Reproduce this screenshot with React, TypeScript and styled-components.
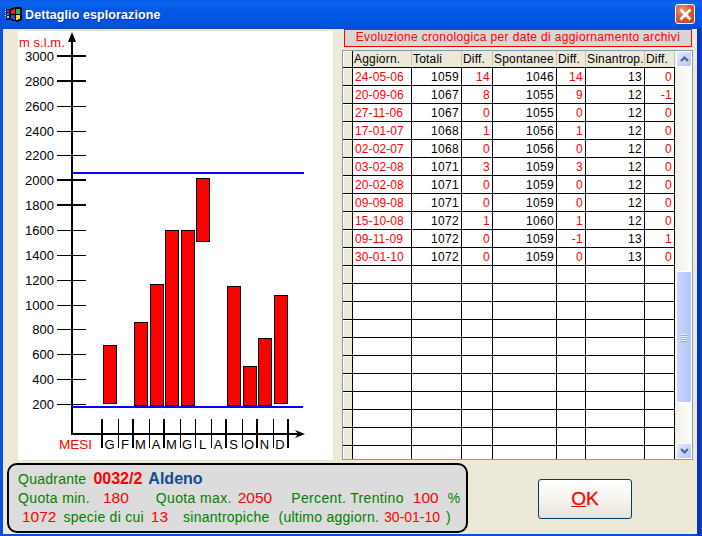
import React from "react";
import styled, { createGlobalStyle } from "styled-components";

const Global = createGlobalStyle`
  html, body { margin: 0; padding: 0; background: #0054e3; }
  * { box-sizing: border-box; }
`;

const Window = styled.div`
  width: 702px; height: 536px; overflow: hidden;
  display: flex; flex-direction: column;
  background: linear-gradient(90deg, #0a50dc 0, #0a50dc 694px, #0331b8 698px, #0a3fc4 702px);
  font-family: "Liberation Sans", Arial, sans-serif;
`;
const TitleBar = styled.div`
  height: 29px; flex: none; display: flex; align-items: center;
  padding: 0 6px 0 5px; gap: 3px;
  background: linear-gradient(180deg, #0a5ae6 0, #0a66f0 3px, #0458e4 9px, #0357e6 18px, #0450dd 25px, #0a49c8 29px);
`;
const TitleText = styled.div`
  flex: 1; color: #fff; font-size: 12.5px; font-weight: bold; letter-spacing: 0.1px;
  text-shadow: 1px 1px 0 #0a2f9c; padding-top: 1px;
`;
const CloseButton = styled.div`
  width: 20px; height: 20px; border-radius: 3px; border: 1px solid #fff;
  background: radial-gradient(circle at 35% 30%, #ee9c7d 0, #dd5a32 45%, #c23a1a 100%);
  display: flex; align-items: center; justify-content: center; margin-top: -1px; margin-right: 1px;
`;
const Frame = styled.div`
  flex: 1; margin: 0 5px 2px 3px; background: #ece9d8; display: flex; flex-direction: column;
`;
const Top = styled.div`
  display: flex; height: 431px; padding-left: 15px;
`;
const ChartPanel = styled.div`
  width: 315px; height: 429px; margin-top: 2px; background: #fff; flex: none;
`;
const RightColumn = styled.div`
  width: 351px; margin-left: 9px; flex: none; display: flex; flex-direction: column;
`;
const Caption = styled.div`
  height: 18px; margin: 0 0 3px 2px; width: 348px;
  border: 1px solid #f00; background: #d6d6d6; color: #f00;
  font-size: 12px; letter-spacing: 0.35px; text-align: center; line-height: 15px; white-space: nowrap;
`;
const GridFrame = styled.div`
  height: 410px; border: 1px solid #7f9db9; display: flex; background: #fff; overflow: hidden;
`;
const GridViewport = styled.div`
  width: 332px; height: 408px; overflow: hidden; flex: none;
`;
const Table = styled.table`
  width: 332px; table-layout: fixed; border-collapse: separate; border-spacing: 0;
`;
const HeadCell = styled.th<{ $w: number }>`
  width: ${(p) => p.$w}px; height: 17px; padding: 0 0 0 1px; background: #ece9d8;
  border-bottom: 1px solid #000;
  box-shadow: inset -1px 0 0 #c7c5b2;
  font-size: 12px; font-weight: normal; letter-spacing: 0.2px; color: #000; text-align: left; white-space: nowrap; overflow: hidden;
  line-height: 16px;
`;
const SelectorHead = styled.th`
  width: 10px; height: 17px; padding: 0; background: #ece9d8;
  border-right: 1px solid #000; border-bottom: 1px solid #000;
  box-shadow: inset 1px 1px 0 #fff;
`;
const SelectorCell = styled.td`
  padding: 0; height: 18px; background: #ece9d8;
  border-right: 1px solid #000; border-bottom: 1px solid #000;
  box-shadow: inset 1px 1px 0 #fff;
`;
const Cell = styled.td<{ $red?: boolean; $date?: boolean }>`
  height: 18px; padding: ${(p) => (p.$date ? "0 0 0 2px" : "0 2px 0 0")};
  border-right: 1px solid #000; border-bottom: 1px solid #000;
  font-size: 12px; line-height: 16px; white-space: nowrap; overflow: hidden;
  text-align: ${(p) => (p.$date ? "left" : "right")};
  color: ${(p) => (p.$red ? "#f00" : "#000")};
  letter-spacing: ${(p) => (p.$date ? "0.1px" : "0.3px")};
`;
const Scrollbar = styled.div`
  width: 17px; height: 408px; flex: none; display: flex; flex-direction: column;
  background: linear-gradient(90deg, #f3f1ec 0, #fdfdfa 100%);
`;
const ScrollButton = styled.div`
  width: 16px; height: 16px; margin-left: 1px; flex: none; border: 1px solid #fff; border-radius: 2px;
  background: linear-gradient(135deg, #e4ebfd 0, #c3d3fb 60%, #b2c5f6 100%);
  display: flex; align-items: center; justify-content: center;
`;
const ScrollTrack = styled.div`
  flex: 1; padding-top: 204px; padding-bottom: 40px; display: flex;
`;
const ScrollThumb = styled.div`
  flex: 1; margin-left: 1px; border: 1px solid #fff; border-radius: 2px;
  background: linear-gradient(90deg, #c9d7fb 0, #bccdf8 50%, #b3c6f6 100%);
  display: flex; flex-direction: column; align-items: center; justify-content: center; gap: 1px;
`;
const Grip = styled.div`
  width: 6px; height: 1px; background: #eef3fe; box-shadow: 0 1px 0 #8ca6e6;
`;
const Bottom = styled.div`
  flex: 1; display: flex; padding-left: 4px;
`;
const InfoPanel = styled.div`
  width: 461px; height: 70px; margin-top: 3px; flex: none; background: #dcdcdc;
  border: 2px solid #000; border-radius: 10px; padding: 4px 0 0 9px;
  display: flex; flex-direction: column;
  font-size: 14px; color: #008000;
`;
const InfoLine = styled.div<{ $inset?: number; $track?: number }>`
  height: 19px; display: flex; align-items: center; white-space: nowrap;
  padding-left: ${(p) => p.$inset ?? 0}px;
  letter-spacing: ${(p) => p.$track ?? 0.25}px;
`;
const Label = styled.span<{ $at?: number }>`
  margin-left: ${(p) => p.$at ?? 0}px;
`;
const Value = styled.span<{ $at?: number; $small?: boolean }>`
  margin-left: ${(p) => p.$at ?? 0}px; color: #f00; letter-spacing: 0;
  font-size: ${(p) => (p.$small ? 14 : 15.5)}px;
`;
const Code = styled.span`
  margin-left: 7px; color: #f00; font-size: 16px; font-weight: bold; letter-spacing: 0;
`;
const Place = styled.span`
  margin-left: 6px; color: #134a8e; font-size: 16px; font-weight: bold; letter-spacing: 0;
`;
const OkButton = styled.button`
  width: 94px; height: 40px; margin: 19px 0 0 70px; flex: none; padding: 0;
  border: 1px solid #003c74; border-radius: 3px;
  background: linear-gradient(180deg, #fff 0, #f3f2ec 60%, #e6e3d6 100%);
  color: #f00; font-family: "Liberation Sans", Arial, sans-serif; font-size: 19px; font-weight: normal;
  -webkit-text-stroke: 0.3px #f00;
`;
const Underlined = styled.span`
  text-decoration: underline;
`;

const ticks = [3000, 2800, 2600, 2400, 2200, 2000, 1800, 1600, 1400, 1200, 1000, 800, 600, 400, 200];
const months = ["G", "F", "M", "A", "M", "G", "L", "A", "S", "O", "N", "D"];
const bars: [number, number, number][] = [
  [103, 345, 404], [134, 322, 406], [150, 284, 406], [165, 230, 406], [181, 230, 406],
  [196, 178, 242], [227, 286, 406], [243, 366, 406], [258, 338, 406], [274, 295, 404],
];

const Chart = () => (
  <svg width="315" height="429" viewBox="18 31 315 429" fontFamily="'Liberation Sans', Arial, sans-serif">
    <text x="19" y="47" fontSize="13" letterSpacing="0.05" fill="#f00">m s.l.m.</text>
    {ticks.map((t, i) => {
      const y = Math.round(56 + i * 24.86);
      const thick = i < 2 || t === 2000 || t === 1800;
      return (
        <g key={t}>
          <text x="54" y={y + 5} fontSize="13" textAnchor="end" fill="#000">{t}</text>
          <rect x="57" y={thick ? y - 1 : y} width="29" height={thick ? 2 : 1} fill="#000" />
        </g>
      );
    })}
    <rect x="71" y="38" width="2" height="396" fill="#000" />
    <path d="M72 32 L76 42 L68 42 Z" fill="#000" />
    <rect x="71" y="433" width="229" height="2" fill="#000" />
    <path d="M305 434 L295 430 L298 434 L295 438 Z" fill="#000" />
    {bars.map(([x, top, bottom]) => (
      <rect key={x + "-" + top} x={x + 0.5} y={top + 0.5} width="13" height={bottom - top - 1} fill="#f00" stroke="#000" />
    ))}
    <rect x="73" y="172" width="231" height="2" fill="#00f" />
    <rect x="72" y="406" width="231" height="2" fill="#00f" />
    {Array.from({ length: 13 }, (_, i) => {
      const x = Math.round(102 + i * 15.5);
      const thick = i % 2 === 0 && i !== 6;
      return <rect key={i} x={x - (thick ? 1 : 0)} y="419" width={thick ? 2 : 1} height="29" fill="#000" />;
    })}
    {months.map((m, i) => (
      <text key={i} x={109.5 + i * 15.5} y="449" fontSize="13" textAnchor="middle" fill="#000">{m}</text>
    ))}
    <text x="59" y="449" fontSize="13.5" fill="#f00">MESI</text>
  </svg>
);

const rows = [
  ["24-05-06", "1059", "14", "1046", "14", "13", "0"],
  ["20-09-06", "1067", "8", "1055", "9", "12", "-1"],
  ["27-11-06", "1067", "0", "1055", "0", "12", "0"],
  ["17-01-07", "1068", "1", "1056", "1", "12", "0"],
  ["02-02-07", "1068", "0", "1056", "0", "12", "0"],
  ["03-02-08", "1071", "3", "1059", "3", "12", "0"],
  ["20-02-08", "1071", "0", "1059", "0", "12", "0"],
  ["09-09-08", "1071", "0", "1059", "0", "12", "0"],
  ["15-10-08", "1072", "1", "1060", "1", "12", "0"],
  ["09-11-09", "1072", "0", "1059", "-1", "13", "1"],
  ["30-01-10", "1072", "0", "1059", "0", "13", "0"],
];
const emptyRows = Array.from({ length: 11 }, (_, i) => i);
const heads: [string, number][] = [
  ["Aggiorn.", 59], ["Totali", 50], ["Diff.", 31], ["Spontanee", 64], ["Diff.", 29], ["Sinantrop.", 59], ["Diff.", 30],
];

const Flag = () => (
  <svg width="17" height="15" viewBox="0 0 17 15" shapeRendering="crispEdges">
    <rect x="0" y="2" width="1" height="1" fill="#7ea6f0" />
    <rect x="0" y="4" width="1" height="1" fill="#f0f4ff" />
    <rect x="0" y="6" width="1" height="1" fill="#7ea6f0" />
    <rect x="0" y="8" width="1" height="1" fill="#f0f4ff" />
    <rect x="0" y="10" width="1" height="1" fill="#7ea6f0" />
    <rect x="1" y="2" width="4" height="11" fill="#0a1c50" />
    <rect x="2" y="3" width="2" height="2" fill="#e02020" />
    <rect x="2" y="6" width="2" height="2" fill="#2a7af0" />
    <rect x="2" y="9" width="2" height="2" fill="#e8d020" />
    <path d="M5 2 L9 0 L16 0 L17 2 L17 13 L13 15 L8 14 L5 13 Z" fill="#000" />
    <path d="M6 3 L10 2 L10 7 L6 7 Z" fill="#e82018" />
    <path d="M11 2 L15 2 L15 7 L11 7 Z" fill="#18c038" />
    <path d="M6 8 L10 8 L10 13 L6 12 Z" fill="#2848e8" />
    <path d="M11 8 L15 8 L15 12 L11 13 Z" fill="#f4dc18" />
  </svg>
);

const Chevron = ({ up }: { up?: boolean }) => (
  <svg width="9" height="6" viewBox="0 0 9 6">
    <path d={up ? "M1 5 L4.5 1.5 L8 5" : "M1 1 L4.5 4.5 L8 1"} fill="none" stroke="#4d6185" strokeWidth="2" />
  </svg>
);

export default function App() {
  return (
    <Window>
      <Global />
      <TitleBar>
        <Flag />
        <TitleText>Dettaglio esplorazione</TitleText>
        <CloseButton>
          <svg width="13" height="13" viewBox="0 0 13 13">
            <path d="M2.5 2.5 L10.5 10.5 M10.5 2.5 L2.5 10.5" stroke="#fff" strokeWidth="2.8" strokeLinecap="square" />
          </svg>
        </CloseButton>
      </TitleBar>
      <Frame>
        <Top>
          <ChartPanel><Chart /></ChartPanel>
          <RightColumn>
            <Caption>Evoluzione cronologica per date di aggiornamento archivi</Caption>
            <GridFrame>
              <GridViewport>
                <Table>
                  <thead>
                    <tr>
                      <SelectorHead />
                      {heads.map(([h, w], i) => <HeadCell key={i} $w={w}>{h}</HeadCell>)}
                    </tr>
                  </thead>
                  <tbody>
                    {rows.map((r) => (
                      <tr key={r[0]}>
                        <SelectorCell />
                        <Cell $red $date>{r[0]}</Cell>
                        <Cell>{r[1]}</Cell>
                        <Cell $red>{r[2]}</Cell>
                        <Cell>{r[3]}</Cell>
                        <Cell $red>{r[4]}</Cell>
                        <Cell>{r[5]}</Cell>
                        <Cell $red>{r[6]}</Cell>
                      </tr>
                    ))}
                    {emptyRows.map((i) => (
                      <tr key={i}>
                        <SelectorCell />
                        {heads.map((_, j) => <Cell key={j} />)}
                      </tr>
                    ))}
                  </tbody>
                </Table>
              </GridViewport>
              <Scrollbar>
                <ScrollButton><Chevron up /></ScrollButton>
                <ScrollTrack>
                  <ScrollThumb>
                    <Grip /><Grip /><Grip /><Grip />
                  </ScrollThumb>
                </ScrollTrack>
                <ScrollButton><Chevron /></ScrollButton>
              </Scrollbar>
            </GridFrame>
          </RightColumn>
        </Top>
        <Bottom>
          <InfoPanel>
            <InfoLine>
              <Label>Quadrante</Label><Code>0032/2</Code><Place>Aldeno</Place>
            </InfoLine>
            <InfoLine $track={0.35}>
              <Label>Quota min.</Label><Value $at={13}>180</Value>
              <Label $at={27}>Quota max.</Label><Value $at={6}>2050</Value>
              <Label $at={19}>Percent. Trentino</Label><Value $at={9}>100</Value>
              <Label $at={9}>%</Label>
            </InfoLine>
            <InfoLine $inset={4}>
              <Value>1072</Value><Label $at={7}>specie di cui</Label><Value $at={7}>13</Value>
              <Label $at={15}>sinantropiche</Label><Label $at={9}>(ultimo aggiorn.</Label>
              <Value $at={5} $small>30-01-10</Value><Label $at={6}>)</Label>
            </InfoLine>
          </InfoPanel>
          <OkButton><Underlined>O</Underlined>K</OkButton>
        </Bottom>
      </Frame>
    </Window>
  );
}
